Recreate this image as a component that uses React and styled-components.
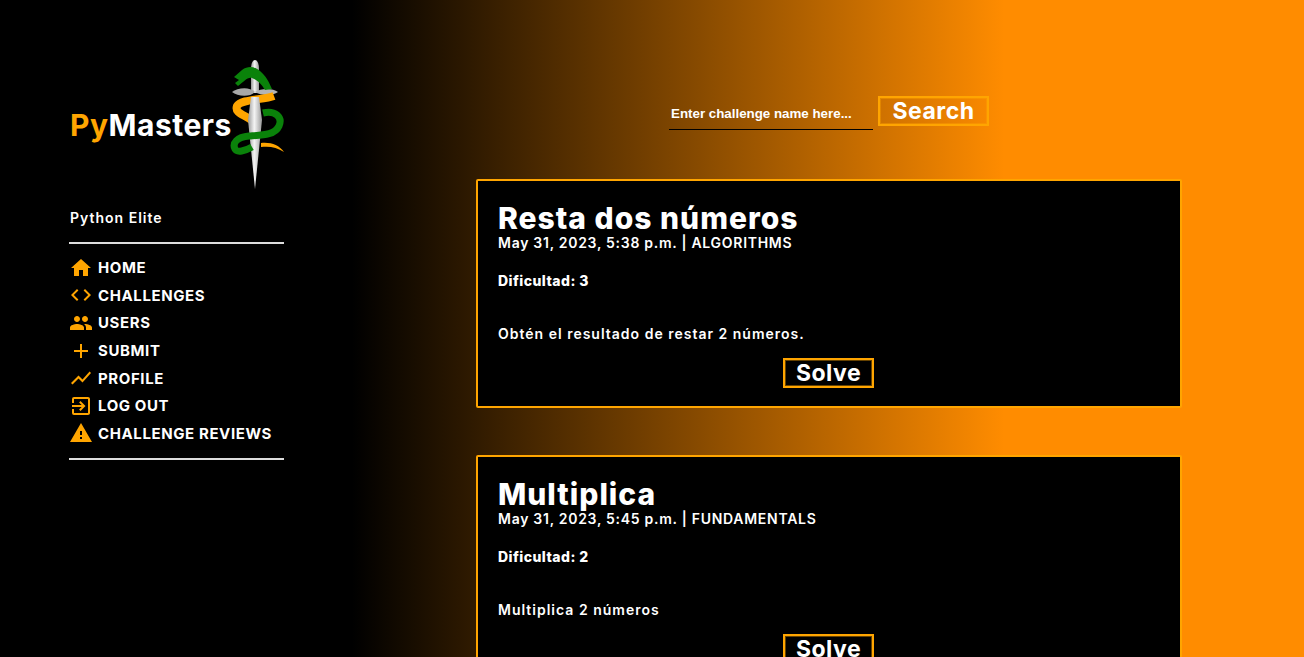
import React from "react";
import styled, { createGlobalStyle } from "styled-components";
import {
  MdHome,
  MdCode,
  MdPeople,
  MdAdd,
  MdShowChart,
  MdExitToApp,
  MdWarning,
} from "react-icons/md";

const GlobalStyle = createGlobalStyle`
  html, body {
    margin: 0;
    height: 100%;
    overflow: hidden;
  }

  body {
    background: linear-gradient(to right, #000 27%, #ff8c00 77%);
    font-family: "Inter", "Liberation Sans", sans-serif;
    color: #fff;
  }
`;

const Page = styled.div`
  display: flex;
  align-items: flex-start;
  height: 657px;
  overflow: hidden;
  padding-left: 69px;
`;

const Sidebar = styled.aside`
  width: 215px;
  flex-shrink: 0;
  padding-top: 60px;
`;

const Logo = styled.div`
  display: flex;
  align-items: flex-start;
  height: 130px;
`;

const LogoText = styled.div`
  font-size: 30px;
  font-weight: 700;
  letter-spacing: 0.5px;
  line-height: 36px;
  margin: 47px 0 0 1px;
  width: 160px;
  flex-shrink: 0;
  white-space: nowrap;

  span {
    color: #ffa500;
  }
`;

const DaggerSvg = styled.svg`
  flex-shrink: 0;
  margin: -5px 0 0 -5px;
`;

const Rank = styled.div`
  font-size: 14px;
  font-weight: 600;
  letter-spacing: 1px;
  line-height: 18px;
  margin-top: 19px;
  padding: 0 0 15px 1px;
  border-bottom: 2px solid #ddd;
`;

const NavList = styled.nav`
  display: flex;
  flex-direction: column;
  padding: 10px 0 11px;
  border-bottom: 2px solid #ddd;
`;

const NavItem = styled.div`
  display: flex;
  align-items: center;
  gap: 5px;
  height: 27.6px;
  font-size: 15px;
  font-weight: 700;
  letter-spacing: 0.6px;
  white-space: nowrap;

  svg {
    color: #ffa500;
    flex-shrink: 0;
  }
`;

const Main = styled.main`
  width: 706px;
  margin-left: 192px;
  flex-shrink: 0;
  padding-top: 96px;
`;

const SearchRow = styled.form`
  display: flex;
  justify-content: center;
  align-items: flex-start;
  gap: 5px;
  margin-bottom: 49px;
`;

const SearchInput = styled.div`
  width: 204px;
  height: 34px;
  box-sizing: border-box;
  border-bottom: 1px solid #000;
  padding: 9px 2px 0;
  font-family: "Liberation Sans", Arial, sans-serif;
  font-size: 13.33px;
  font-weight: 700;
  line-height: 17px;
`;

const OutlineButton = styled.button`
  display: block;
  box-sizing: border-box;
  background: ${(p) => (p.$solid ? "#000" : "transparent")};
  border: 2px solid #ffa500;
  box-shadow: inset 0 0 0 1px rgba(255, 165, 0, 0.4);
  color: #fff;
  font-family: inherit;
  font-weight: 700;
  font-size: 23px;
  letter-spacing: 0.5px;
  line-height: 24px;
  padding: 0;
  height: 30px;
  width: ${(p) => p.$width}px;
`;

const Card = styled.article`
  box-sizing: border-box;
  width: 706px;
  height: 229px;
  background: #000;
  border: 2px solid #ffa500;
  border-radius: 2px;
  padding: 20px 21px 0 20px;
  margin-bottom: 47px;
`;

const Title = styled.h2`
  margin: 0;
  font-size: 30px;
  font-weight: 800;
  letter-spacing: 1px;
  line-height: 34px;
`;

const Meta = styled.div`
  font-size: 14px;
  font-weight: 600;
  letter-spacing: 0.72px;
  line-height: 16px;
`;

const Difficulty = styled.div`
  font-size: 14px;
  font-weight: 800;
  letter-spacing: 0.45px;
  line-height: 18px;
  margin-top: 21px;
`;

const Description = styled.p`
  margin: 35px 0 0;
  font-size: 14px;
  font-weight: 600;
  letter-spacing: 1px;
  line-height: 18px;
`;

const SolveRow = styled.div`
  display: flex;
  justify-content: center;
  margin-top: 15px;
`;

const DaggerLogo = () => (
  <DaggerSvg width="65" height="140" viewBox="0 0 65 140">
    <defs>
      <linearGradient id="blade" x1="0" x2="1" y1="0" y2="0">
        <stop offset="0" stopColor="#999" />
        <stop offset="0.45" stopColor="#f4f4f4" />
        <stop offset="0.6" stopColor="#ddd" />
        <stop offset="1" stopColor="#999" />
      </linearGradient>
    </defs>
    <path d="M26 14C26 2 34 2 34 14V38H26Z" fill="url(#blade)" />
    <path d="M30 37C24 31 12 33 7 37C12 41 24 43 30 37Z" fill="#a8a8a8" />
    <path d="M30 37C36 33 48 33 53 37C48 41 36 41 30 37Z" fill="#b4b4b4" />
    <path d="M36 88C46 87 54 90 59 97C52 92 44 91 36 92Z" fill="#ffa500" />
    <path d="M49 41C38 45 16 44 12 51C9 59 22 60 28 67" stroke="#ffa500" strokeWidth="8" fill="none" />
    <path d="M26 42L34 42L37 65L30 134L23 65Z" fill="url(#blade)" />
    <path d="M38 58C50 55 58 62 54 71C50 80 38 80 24 81C12 82 7 88 10 94C12 98 20 96 27 92" stroke="#0a820a" strokeWidth="7" fill="none" />
    <path d="M9 22L17 15C24 10 30 12 35 16C41 21 44 27 47 34L40 35C36 28 32 25 27 23C22 22 19 27 13 31L10 28L14 25Z" fill="#0a820a" />
  </DaggerSvg>
);

const navItems = [
  { label: "HOME", Icon: MdHome },
  { label: "CHALLENGES", Icon: MdCode },
  { label: "USERS", Icon: MdPeople },
  { label: "SUBMIT", Icon: MdAdd },
  { label: "PROFILE", Icon: MdShowChart },
  { label: "LOG OUT", Icon: MdExitToApp },
  { label: "CHALLENGE REVIEWS", Icon: MdWarning },
];

const challenges = [
  {
    title: "Resta dos números",
    meta: "May 31, 2023, 5:38 p.m. | ALGORITHMS",
    level: 3,
    text: "Obtén el resultado de restar 2 números.",
  },
  {
    title: "Multiplica",
    meta: "May 31, 2023, 5:45 p.m. | FUNDAMENTALS",
    level: 2,
    text: "Multiplica 2 números",
  },
];

export default function App() {
  return (
    <Page>
      <GlobalStyle />
      <Sidebar>
        <Logo>
          <LogoText>
            <span>Py</span>Masters
          </LogoText>
          <DaggerLogo />
        </Logo>
        <Rank>Python Elite</Rank>
        <NavList>
          {navItems.map(({ label, Icon }) => (
            <NavItem key={label}>
              <Icon size={24} />
              {label}
            </NavItem>
          ))}
        </NavList>
      </Sidebar>
      <Main>
        <SearchRow>
          <SearchInput>Enter challenge name here...</SearchInput>
          <OutlineButton type="button" $width={111}>
            Search
          </OutlineButton>
        </SearchRow>
        {challenges.map((c) => (
          <Card key={c.title}>
            <Title>{c.title}</Title>
            <Meta>{c.meta}</Meta>
            <Difficulty>Dificultad: {c.level}</Difficulty>
            <Description>{c.text}</Description>
            <SolveRow>
              <OutlineButton type="button" $width={91} $solid>
                Solve
              </OutlineButton>
            </SolveRow>
          </Card>
        ))}
      </Main>
    </Page>
  );
}
